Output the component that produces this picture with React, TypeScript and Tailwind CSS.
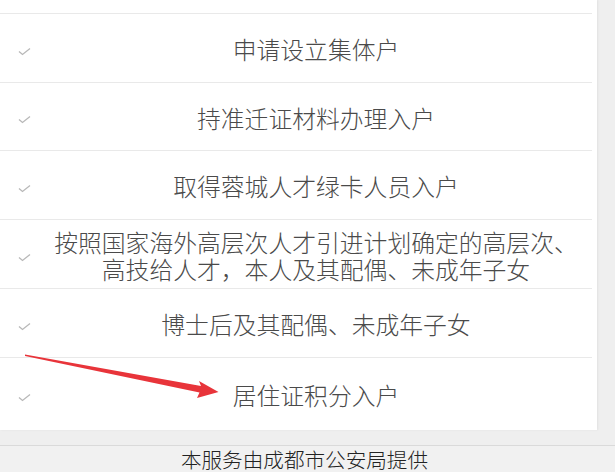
import React from "react";

const rows: { lines: string[]; h: number }[] = [
  { lines: ["申请设立集体户"], h: 69 },
  { lines: ["持准迁证材料办理入户"], h: 68 },
  { lines: ["取得蓉城人才绿卡人员入户"], h: 69 },
  { lines: ["按照国家海外高层次人才引进计划确定的高层次、", "高技给人才，本人及其配偶、未成年子女"], h: 69 },
  { lines: ["博士后及其配偶、未成年子女"], h: 69 },
  { lines: ["居住证积分入户"], h: 73 },
];

function Check() {
  return (
    <svg width="13" height="9" viewBox="0 0 13 9" className="shrink-0">
      <path d="M1 4.5 L4.5 7.5 L12 1.5" fill="none" stroke="#b8b8b8" strokeWidth="1.3" />
    </svg>
  );
}

export default function App() {
  return (
    <div
      className="relative w-[615px] h-[472px] overflow-hidden bg-[#efefef]"
      style={{ fontFamily: '"Noto Sans CJK SC", "Noto Sans", sans-serif' }}
    >
      <div className="flex h-[430px]">
        <div className="w-[597px] h-full bg-white flex flex-col shadow-[1px_0_2px_rgba(0,0,0,0.06)]">
          <div className="h-[13px]" />
          {rows.map((r, i) => (
            <div
              key={i}
              className="flex items-center border-t border-[#e9e9e9] mr-[5px]"
              style={{ height: r.h }}
            >
              <div className="w-[40px] flex justify-start pl-[18px] pt-[6px]">
                <Check />
              </div>
              <div className="flex-1 text-center text-[23.8px] leading-[27px] text-[#4a4a4a] font-light pt-[1px]">
                {r.lines.map((l, j) => (
                  <div key={j} className="whitespace-nowrap">{l}</div>
                ))}
              </div>
            </div>
          ))}
        </div>
        <div className="flex-1" />
      </div>
      <div className="h-[16px] border-b border-[#dadada]" />
      <div className="h-[26px] bg-[#f1f1f1] flex items-center justify-center text-[20.6px] leading-[22px] text-[#222] font-light pr-[6px]">
        本服务由成都市公安局提供
      </div>
      <svg
        className="absolute left-0 top-0 pointer-events-none"
        width="615"
        height="472"
        viewBox="0 0 615 472"
      >
        <path
          d="M25 354.5 L201 386 L199 381 L218.5 392 L197 398 L199.5 392.5 L25 356 Z"
          fill="#e8343a"
        />
      </svg>
    </div>
  );
}
